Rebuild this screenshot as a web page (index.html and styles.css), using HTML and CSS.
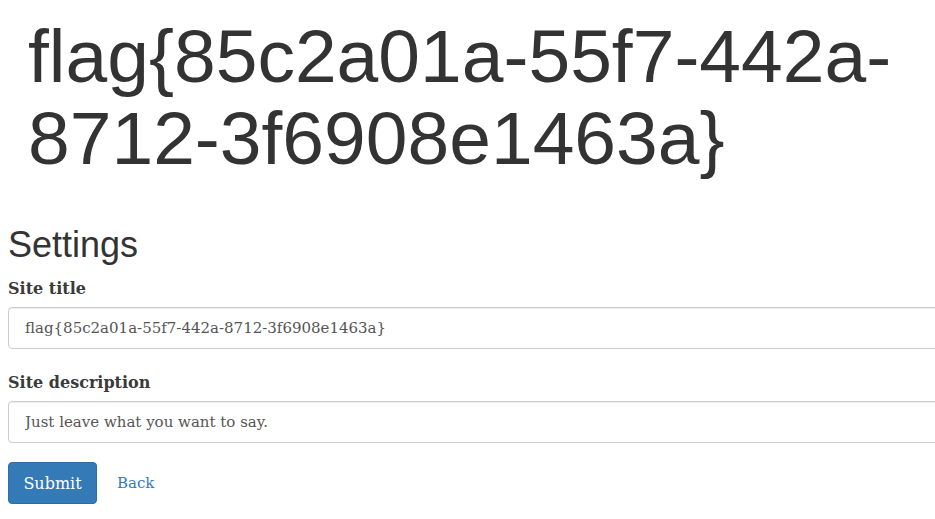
FILE: index.html
```html
<!DOCTYPE html>
<html>
<head>
<meta charset="utf-8">
<link rel="stylesheet" href="styles.css">
</head>
<body>
<div class="page">
  <h1 class="flag">flag{85c2a01a-55f7-442a-8712-3f6908e1463a}</h1>
  <h2 class="title">Settings</h2>
  <form class="form">
    <div class="group">
      <label class="label">Site title</label>
      <input class="input" type="text" value="flag{85c2a01a-55f7-442a-8712-3f6908e1463a}">
    </div>
    <div class="group">
      <label class="label">Site description</label>
      <input class="input" type="text" value="Just leave what you want to say.">
    </div>
    <div class="actions">
      <button class="btn" type="button">Submit</button>
      <a class="back" href="#">Back</a>
    </div>
  </form>
</div>
</body>
</html>
```
FILE: styles.css
```css
html, body { overflow: hidden; }
body {
  margin: 8px 0 8px 8px;
  font-family: "DejaVu Serif", serif;
  color: #333;
  background: #fff;
}
.page { overflow: hidden; }
.flag {
  font-family: "Liberation Sans", Arial, sans-serif;
  font-weight: normal;
  font-size: 75px;
  line-height: 82px;
  margin: 7px 0 0 0;
  padding-left: 20px;
  width: 880px;
  color: #333;
}
.title {
  font-family: "Liberation Sans", Arial, sans-serif;
  font-weight: normal;
  font-size: 36px;
  line-height: 40px;
  margin: 46px 0 0 0;
  color: #333;
}
.form { display: block; }
.group {
  display: flex;
  flex-direction: column;
  align-items: flex-start;
  margin-bottom: 10px;
}
.label {
  display: block;
  font-weight: bold;
  font-size: 16px;
  line-height: 22px;
  margin: 13px 0 7px;
  color: #3a3a3a;
}
.input {
  display: block;
  box-sizing: border-box;
  width: 980px;
  flex: none;
  height: 42px;
  padding: 0 16px;
  border: 1px solid #ccc;
  border-radius: 4px;
  box-shadow: inset 0 1px 1px rgba(0,0,0,.075);
  font-family: "DejaVu Serif", serif;
  font-size: 15px;
  color: #555;
  background: #fff;
}
.actions {
  display: flex;
  align-items: center;
  gap: 20px;
  margin-top: 19px;
}
.btn {
  width: 89px;
  height: 42px;
  background: #337ab7;
  border: 1px solid #2e6da4;
  border-radius: 4px;
  color: #fff;
  font-family: "DejaVu Serif", serif;
  font-size: 16px;
}
.back {
  color: #337ab7;
  text-decoration: none;
  font-size: 15px;
}
```
